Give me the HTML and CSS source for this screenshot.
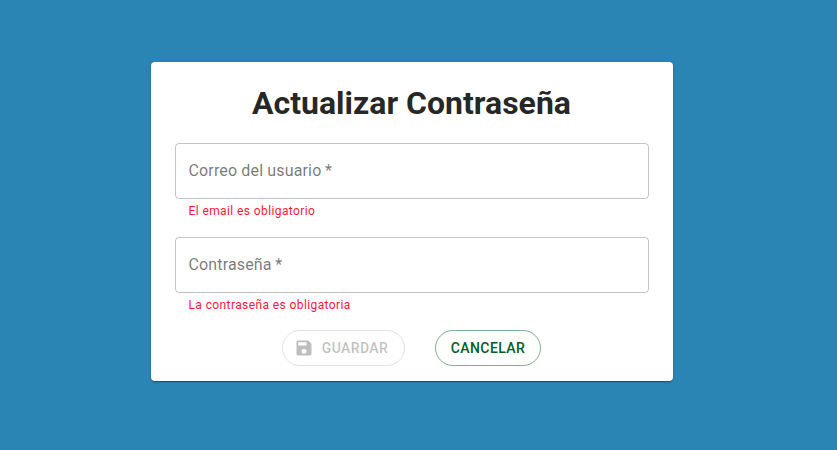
FILE: index.html
```html
<!DOCTYPE html>
<html lang="es">
<head>
<meta charset="utf-8">
<title>Actualizar Contraseña</title>
<link rel="stylesheet" href="styles.css">
</head>
<body>
<main class="card">
  <h1 class="title">Actualizar Contraseña</h1>
  <form class="form">
    <div class="field">
      <div class="input">Correo del usuario<span class="star"> *</span></div>
      <p class="error">El email es obligatorio</p>
    </div>
    <div class="field">
      <div class="input">Contraseña<span class="star"> *</span></div>
      <p class="error">La contraseña es obligatoria</p>
    </div>
    <div class="actions">
      <button class="btn btn-save" type="button" disabled>
        <svg class="icon" viewBox="0 0 24 24"><path d="M17 3H5c-1.11 0-2 .9-2 2v14c0 1.1.89 2 2 2h14c1.1 0 2-.9 2-2V7l-4-4zm-5 16c-1.66 0-3-1.34-3-3s1.34-3 3-3 3 1.34 3 3-1.34 3-3 3zm3-10H5V5h10v4z"/></svg>
        Guardar
      </button>
      <button class="btn btn-cancel" type="button">Cancelar</button>
    </div>
  </form>
</main>
</body>
</html>
```
FILE: styles.css
```css
* { box-sizing: border-box; }
body {
  margin: 0;
  height: 450px;
  padding: 62px 0 0 150.5px;
  background: #2a84b4;
  font-family: Roboto, sans-serif;
  overflow: hidden;
}
.card {
  width: 522px;
  height: 319px;
  padding: 22px 24px 0;
  background: #fff;
  border-radius: 4px;
  box-shadow: 0 2px 1px -1px rgba(0,0,0,.2), 0 1px 1px rgba(0,0,0,.14), 0 1px 3px rgba(0,0,0,.12);
}
.title {
  margin: 0 0 21px;
  font-size: 32px;
  line-height: 38px;
  font-weight: 700;
  text-align: center;
  color: rgba(0,0,0,.87);
}
.field { height: 94px; }
.input {
  height: 56px;
  padding: 0 13px;
  border: 1px solid rgba(0,0,0,.23);
  border-radius: 4px;
  font-size: 16px;
  line-height: 54px;
  letter-spacing: .15px;
  color: rgba(0,0,0,.54);
}
.star { margin-left: -.6px; }
.error {
  margin: 2px 14px 0;
  font-size: 12px;
  line-height: 20px;
  letter-spacing: .4px;
  color: #ff1739;
}
.actions {
  display: flex;
  justify-content: center;
  gap: 30px;
  margin: -1px 1px 0 0;
}
.btn {
  display: flex;
  align-items: center;
  justify-content: center;
  height: 36px;
  padding: 0;
  border: 1px solid;
  border-radius: 18px;
  background: transparent;
  font: 500 14px/24px Roboto, sans-serif;
  letter-spacing: .4px;
  text-transform: uppercase;
}
.btn-save { width: 123px; padding-right: 4px; color: rgba(0,0,0,.26); border-color: rgba(0,0,0,.12); }
.btn-cancel { width: 106px; padding-left: 1px; color: #006022; border-color: rgba(0,96,34,.5); }
.icon { width: 20px; height: 20px; margin-right: 8px; fill: currentColor; }
```
